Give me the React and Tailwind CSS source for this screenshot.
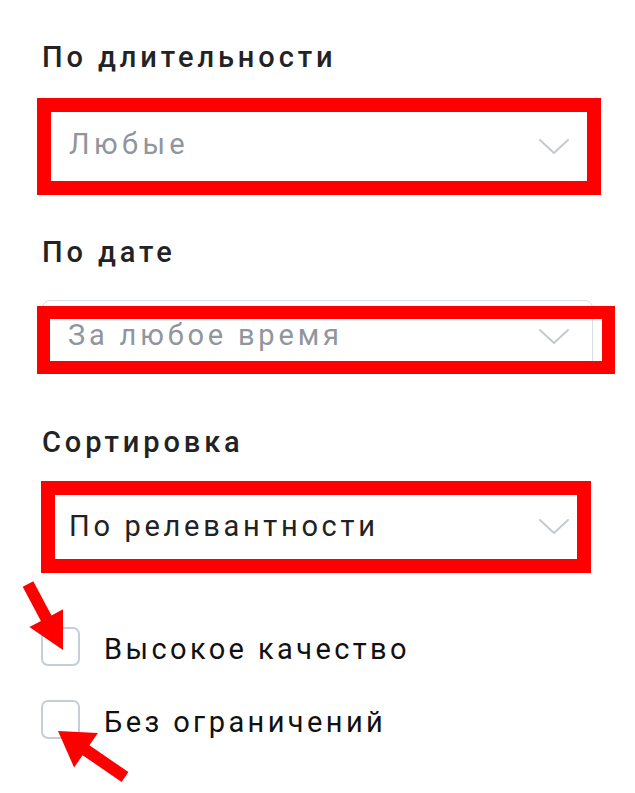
const Chevron = () => (
  <svg width="32" height="18" viewBox="0 0 32 18" className="shrink-0">
    <path d="M2 2 L16 15 L30 2" fill="none" stroke="#c3cad2" strokeWidth="2" strokeLinecap="round" strokeLinejoin="round" />
  </svg>
)

function Label({ children, className = "" }) {
  return (
    <div className={`text-[29px] leading-[32px] font-medium text-[#222324] tracking-[3.9px] ${className}`}>
      {children}
    </div>
  )
}

function Checkbox({ label, className = "" }) {
  return (
    <div className={`flex items-center ${className}`}>
      <div className="w-[39px] h-[39px] rounded-[7px] border-2 border-[#c5ced8] bg-white shrink-0" />
      <span className="ml-[24px] mt-[4px] text-[29px] leading-[32px] text-[#111] tracking-[3.4px]">{label}</span>
    </div>
  )
}

export default function App() {
  return (
    <div
      className="relative w-[635px] h-[793px] bg-white overflow-hidden"
      style={{ fontFamily: "Roboto, 'Liberation Sans', sans-serif" }}
    >
      <div className="pt-[41px] pl-[42px]">
        <Label>По длительности</Label>

        {/* duration select, outlined in red */}
        <div className="mt-[25px] ml-[-5px] w-[564px] h-[97px] border-[14px] border-[#ff0000] bg-white flex items-center justify-between pl-[18px] pr-[17px] pb-[4px]">
          <span className="text-[29px] text-[#8f969d] tracking-[4.4px]">Любые</span>
          <span className="mt-[4px]"><Chevron /></span>
        </div>

        <Label className="mt-[41px]">По дате</Label>

        {/* date select with the red box laid over it */}
        <div className="relative mt-[32px] w-[551px] h-[68px] rounded-[8px] border border-[#d7dde3] bg-white flex items-center justify-between pl-[25px] pr-[22px] pb-[2px]">
          <span className="text-[29px] text-[#8f969d] tracking-[3.8px] mt-[6px]">За любое время</span>
          <span className="mt-[8px]"><Chevron /></span>
          <div className="absolute left-[-6px] top-[5px] w-[578px] h-[68px] border-[13px] border-[#ff0000]" />
        </div>

        <Label className="mt-[58px]">Сортировка</Label>

        {/* sort select */}
        <div className="mt-[23px] ml-[-1px] w-[550px] h-[92px] border-[14px] border-[#ff0000] bg-white flex items-center justify-between pl-[14px] pr-[7px]">
          <span className="text-[29px] text-[#222] tracking-[3.7px]">По релевантности</span>
          <Chevron />
        </div>

        <Checkbox className="mt-[54px] ml-[-1px]" label="Высокое качество" />
        <Checkbox className="mt-[34px] ml-[-1px]" label="Без ограничений" />
      </div>

      {/* annotation arrows */}
      <svg className="absolute inset-0 pointer-events-none" width="635" height="793" viewBox="0 0 635 793">
        <polygon
          fill="#ff0000"
          points="33.3,581.2 51.5,615.4 63,609.3 63,650 29.4,627.1 40.9,621 22.7,586.8"
        />
        <polygon
          fill="#ff0000"
          points="58,731 97.9,732.9 89.4,745.3 128.4,772.1 121.6,781.9 82.6,755.2 74.1,767.5"
        />
      </svg>
    </div>
  )
}
